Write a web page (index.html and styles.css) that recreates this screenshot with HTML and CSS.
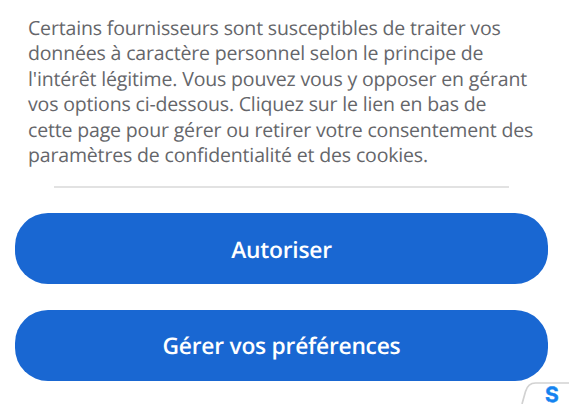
FILE: index.html
```html
<!DOCTYPE html>
<html lang="fr">
<head>
<meta charset="utf-8">
<title>Consentement</title>
<link rel="stylesheet" href="styles.css">
</head>
<body>
<main class="consent">
<p class="text">Certains fournisseurs sont susceptibles de traiter vos<br>données à caractère personnel selon le principe de<br>l'intérêt légitime. Vous pouvez vous y opposer en gérant<br>vos options ci-dessous. Cliquez sur le lien en bas de<br>cette page pour gérer ou retirer votre consentement des<br>paramètres de confidentialité et des cookies.</p>
<hr class="rule">
<div class="actions">
<button class="btn"><span class="label">Autoriser</span></button>
<button class="btn">Gérer vos préférences</button>
</div>
</main>
<div class="tab">
<svg width="50" height="24" viewBox="0 0 50 24"><path d="M3 24 L6.500 11.500 Q9 3 16.500 3 H50" fill="none" stroke="#d2d2d2" stroke-width="1.700"/></svg>
<span class="mark">S</span>
</div>
</body>
</html>
```
FILE: styles.css
```css
body {
  margin: 0;
  height: 404px;
  overflow: hidden;
  position: relative;
  background: #fff;
  font-family: "Open Sans", sans-serif;
  text-rendering: geometricPrecision;
}
.consent {
  padding: 14.7px 21px 0 15px;
}
.text {
  margin: 0 0 0 13px;
  font-size: 19.5px;
  letter-spacing: -0.16px;
  line-height: 25.5px;
  color: #65666a;
  white-space: nowrap;
}
.rule {
  margin: 18.3px 39px 25px;
  border: 0;
  height: 2px;
  background: #e2e2e2;
}
.actions {
  display: flex;
  flex-direction: column;
  gap: 25.4px;
  padding-top: 0.4px;
}
.btn {
  height: 71px;
  padding: 0;
  border: 0;
  border-radius: 33px;
  background: #1967d2;
  color: #fff;
  font: 600 22.8px "Open Sans", sans-serif;
  letter-spacing: -0.25px;
  text-rendering: geometricPrecision;
}
.label {
  display: block;
  padding-top: 2px;
}
.tab {
  position: absolute;
  right: 0;
  bottom: 0;
  width: 50px;
  height: 24px;
}
.mark {
  position: absolute;
  left: 26px;
  top: 7px;
  font: 700 21px/17px Inter, sans-serif;
  color: #1483f0;
  -webkit-text-stroke: 0.4px #1483f0;
}
```
